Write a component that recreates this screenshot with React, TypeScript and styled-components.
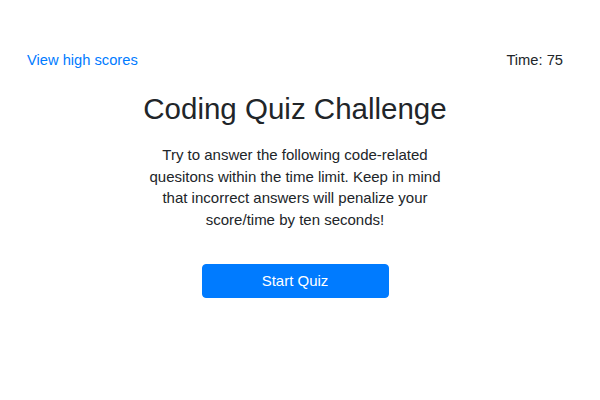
import React from "react";
import styled, { createGlobalStyle } from "styled-components";

const Global = createGlobalStyle`
  html, body { margin: 0; padding: 0; background: #fff; }
  body {
    font-family: "Liberation Sans", Arial, Helvetica, sans-serif;
    color: #212529;
    font-size: 14.7px;
    line-height: 1.5;
  }
`;

const Page = styled.div`
  width: 590px;
  padding-top: 48px;
`;

const Header = styled.header`
  display: flex;
  justify-content: space-between;
  align-items: center;
  padding: 0 27px;
  height: 24px;
`;

const HighScores = styled.a`
  color: #007bff;
  text-decoration: none;
  cursor: pointer;
`;

const Timer = styled.div`
  color: #212529;
`;

const Main = styled.main`
  display: flex;
  flex-direction: column;
  align-items: center;
  text-align: center;
  margin-top: 19px;
`;

const Title = styled.h1`
  margin: 0;
  font-size: 29.5px;
  font-weight: 400;
  line-height: 36px;
`;

const Intro = styled.p`
  width: 300px;
  margin: 17px 0 0;
  font-size: 15px;
  line-height: 21.7px;
`;

const StartButton = styled.button`
  margin-top: 33px;
  width: 187px;
  height: 34px;
  border: 1px solid #007bff;
  border-radius: 4px;
  background: #007bff;
  color: #fff;
  font-family: inherit;
  font-size: 15px;
  cursor: pointer;
`;

export default function App() {
  return (
    <>
      <Global />
      <Page>
        <Header>
          <HighScores>View high scores</HighScores>
          <Timer>Time: 75</Timer>
        </Header>
        <Main>
          <Title>Coding Quiz Challenge</Title>
          <Intro>
            Try to answer the following code-related quesitons within the time
            limit. Keep in mind that incorrect answers will penalize your
            score/time by ten seconds!
          </Intro>
          <StartButton>Start Quiz</StartButton>
        </Main>
      </Page>
    </>
  );
}
